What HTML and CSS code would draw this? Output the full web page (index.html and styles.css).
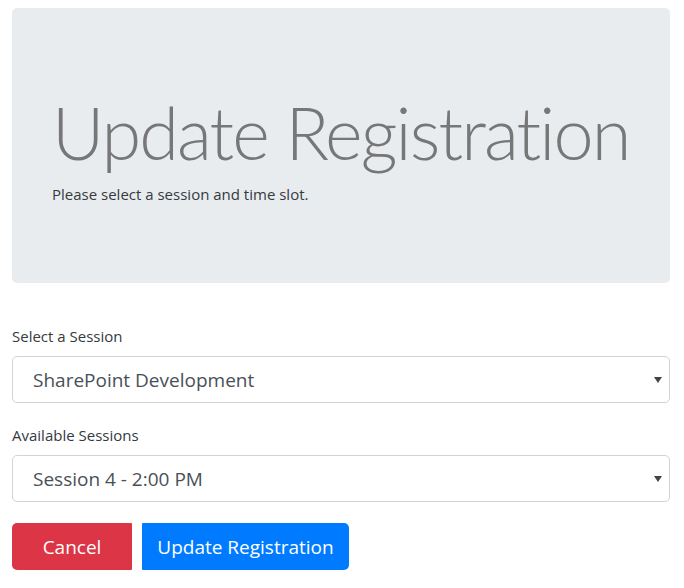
FILE: index.html
```html
<!DOCTYPE html>
<html lang="en">
<head>
<meta charset="utf-8">
<title>Update Registration</title>
<link rel="stylesheet" href="styles.css">
</head>
<body>
<div class="page">
  <div class="jumbotron">
    <h1 class="display">Update Registration</h1>
    <p class="lead">Please select a session and time slot.</p>
  </div>
  <form class="form">
    <div class="form-group">
      <label class="label" for="session">Select a Session</label>
      <div class="select-wrap">
        <select id="session" class="select">
          <option>SharePoint Development</option>
        </select>
      </div>
    </div>
    <div class="form-group">
      <label class="label" for="slot">Available Sessions</label>
      <div class="select-wrap">
        <select id="slot" class="select">
          <option>Session 4 - 2:00 PM</option>
        </select>
      </div>
    </div>
    <div class="actions">
      <button type="button" class="btn btn-cancel">Cancel</button>
      <button type="button" class="btn btn-primary">Update Registration</button>
    </div>
  </form>
</div>
</body>
</html>
```
FILE: styles.css
```css
* { box-sizing: border-box; }
html, body { margin: 0; padding: 0; background: #fff; }
body {
  font-family: "Open Sans", "Noto Sans", sans-serif;
  color: #212529;
}
.page {
  padding: 8px 14px 0 12px;
}
.jumbotron {
  background: #e9ecef;
  border-radius: 5px;
  padding: 81px 20px 78px 40px;
  margin-bottom: 42px;
}
.display {
  margin: 0 0 8px 0;
  font-family: "Lato", "Open Sans", sans-serif;
  font-size: 72px;
  line-height: 86px;
  font-weight: 300;
  letter-spacing: -1.9px;
  font-variant-ligatures: none;
  color: #777;
  white-space: nowrap;
}
.lead {
  margin: 0;
  font-size: 15px;
  line-height: 22px;
  color: #343a40;
}
.form-group { margin-bottom: 21px; }
.label {
  display: block;
  font-size: 15px;
  line-height: 22px;
  margin-bottom: 9px;
  color: #343a40;
}
.select-wrap { position: relative; }
.select-wrap::after {
  content: "";
  position: absolute;
  right: 8px;
  top: 21px;
  border-left: 4px solid transparent;
  border-right: 4px solid transparent;
  border-top: 6px solid #444;
  pointer-events: none;
}
.select {
  display: block;
  width: 100%;
  height: 47px;
  -webkit-appearance: none;
  appearance: none;
  background: #fff;
  border: 1px solid #ced4da;
  border-radius: 5px;
  padding: 0 30px 0 20px;
  font-family: inherit;
  font-size: 19px;
  color: #495057;
}
.actions {
  display: flex;
  gap: 10px;
}
.btn {
  height: 47px;
  border: none;
  font-family: inherit;
  font-size: 19px;
  color: #fff;
  padding: 0 17px;
}
.btn-cancel {
  width: 120px;
  background: #dc3545;
  border-radius: 5px 1px 1px 5px;
}
.btn-primary {
  width: 207px;
  padding: 0;
  background: #007bff;
  border-radius: 1px 5px 5px 1px;
}
```
